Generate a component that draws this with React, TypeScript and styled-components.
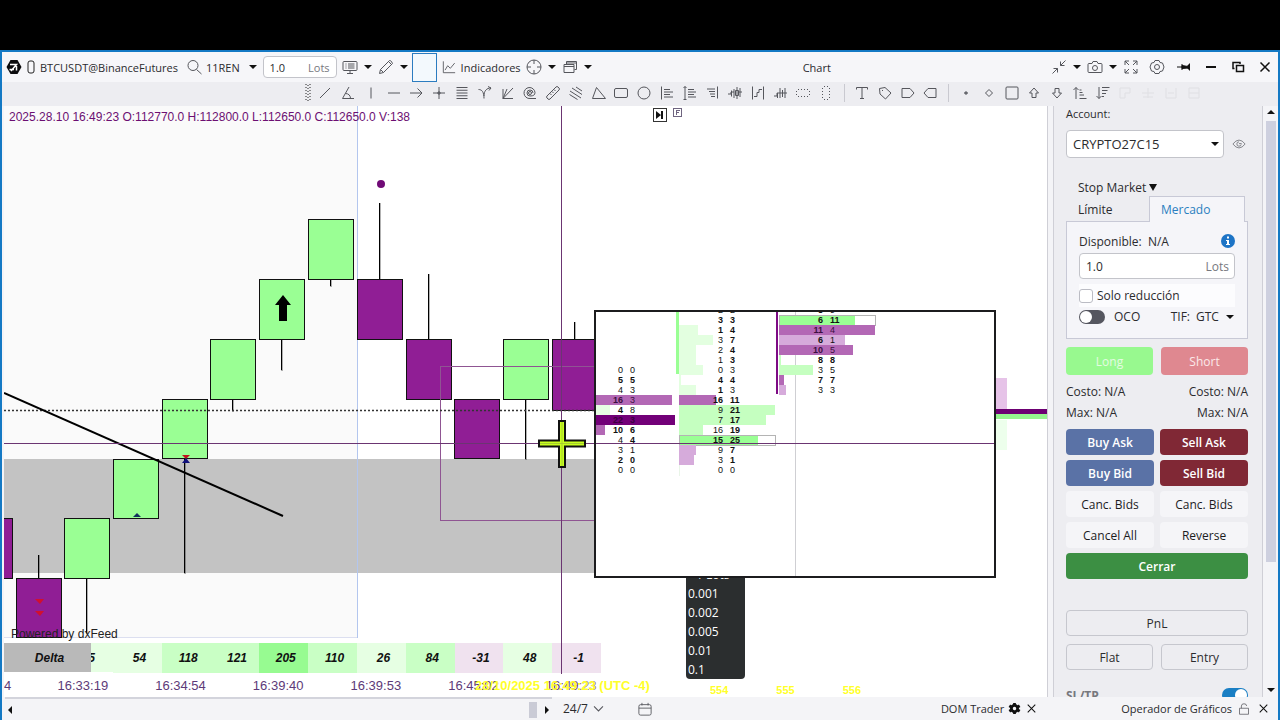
import React from "react";
import styled, { createGlobalStyle, css } from "styled-components";

const uiFont = '"Open Sans", "Noto Sans", sans-serif';
const chartFont = '"Liberation Sans", Arial, sans-serif';

const GlobalStyle = createGlobalStyle`
  *, *::before, *::after { box-sizing: border-box; }
  body { margin: 0; background: #000; font-family: ${uiFont}; font-size: 12px; color: #2b2b2e; }
  button, input, select { font: inherit; color: inherit; margin: 0; }
  button { cursor: pointer; }
`;

/* ---------- shell ---------- */

const Page = styled.div`
  display: flex;
  flex-direction: column;
  height: 100vh;
  padding-top: 50px;
`;

const Window = styled.main`
  flex: 1;
  min-height: 0;
  display: flex;
  flex-direction: column;
  border: solid #1479c4;
  border-width: 2px 2px 0;
  background: #f4f4f7;
`;

const TitleBar = styled.header`
  display: flex;
  align-items: center;
  height: 30px;
  padding: 0 5px 0 4px;
  background: #f6f6f9;
  font-size: 11px;
`;

const Group = styled.div<{ $gap?: number }>`
  display: flex;
  align-items: center;
  gap: ${(p) => p.$gap ?? 5}px;
  margin-right: ${(p) => (p.$gap ? 0 : 10)}px;
`;

const LeftGroup = styled(Group)`
  margin-right: 0;
`;

const Title = styled.h1`
  flex: 1;
  margin: 0;
  padding-right: 10px;
  font-size: 11px;
  font-weight: 400;
  text-align: center;
`;

const Label = styled.span`
  font-size: 11px;
  white-space: nowrap;
`;

const Instrument = styled(Label)`
  margin-right: 4px;
`;

const IconButton = styled.button<{ $w?: number }>`
  display: flex;
  align-items: center;
  justify-content: center;
  flex: none;
  width: ${(p) => p.$w ?? 16}px;
  height: 20px;
  padding: 0;
  border: 0;
  background: none;
`;

const TextButton = styled.button`
  display: flex;
  align-items: center;
  gap: 5px;
  padding: 0;
  border: 0;
  background: none;
  white-space: nowrap;
`;

const ActiveSlot = styled.button`
  width: 25px;
  height: 29px;
  margin-left: -2px;
  padding: 0;
  border: 1px solid #2b7cc0;
  background: #f3f9fd;
`;

const Field = styled.label<{ $size: "small" | "large" }>`
  display: flex;
  align-items: center;
  border: 1px solid #c3c4ca;
  border-radius: 4px;
  background: #fff;
  color: #77787e;
  ${(p) =>
    p.$size === "small"
      ? css`
          width: 74px;
          height: 22px;
          padding: 0 6px;
        `
      : css`
          height: 26px;
          padding: 0 5px 0 6px;
        `}
`;

const FieldInput = styled.input`
  flex: 1;
  min-width: 0;
  padding: 0;
  border: 0;
  outline: 0;
  background: none;
  color: #2b2b2e;
`;

const DrawBar = styled.nav`
  display: flex;
  align-items: center;
  height: 24px;
  padding: 0 0 2px 303px;
  background: #ededf1;
`;

const Tools = styled.div`
  display: flex;
  align-items: center;
  flex: 0 1 891px;
  margin-left: 3px;
`;

const Tool = styled.button<{ $faint?: boolean }>`
  display: flex;
  align-items: center;
  justify-content: center;
  flex: 1;
  height: 20px;
  padding: 0;
  border: 0;
  background: none;
  opacity: ${(p) => (p.$faint ? 0.08 : 1)};
`;

const ToolSeparator = styled.span`
  flex: none;
  width: 1px;
  height: 18px;
  margin: 0 6px;
  background: #c9c9d0;
`;

const Body = styled.div`
  flex: 1;
  min-height: 0;
  display: flex;
  padding-left: 2px;
`;

/* ---------- icons ---------- */

const Svg = styled.svg`
  display: block;
  flex: none;
  overflow: visible;
`;

type IconProps = { d: string; size?: number; color?: string; width?: number; fill?: string; children?: React.ReactNode };

function Icon({ d, size = 16, color = "#55565c", width = 1, fill = "none", children }: IconProps) {
  return (
    <Svg width={size} height={size} viewBox="0 0 16 16" fill={fill} stroke={color} strokeWidth={width} aria-hidden="true">
      <path d={d} />
      {children}
    </Svg>
  );
}

const caretPaths = {
  down: "M1 3h8L5 7z",
  tall: "M1 2h8L5 9z",
  up: "M1 7h8L5 3z",
  left: "M7 1v8L3 5z",
  right: "M3 1v8l4-4z",
};

function Caret({ dir = "down" }: { dir?: keyof typeof caretPaths }) {
  return (
    <Svg width="10" height="10" viewBox="0 0 10 10" fill="#111" aria-hidden="true">
      <path d={caretPaths[dir]} />
    </Svg>
  );
}

function CaretButton({ label }: { label: string }) {
  return (
    <IconButton $w={10} aria-label={label}>
      <Caret />
    </IconButton>
  );
}

function Logo() {
  return (
    <Svg width="16" height="16" viewBox="0 0 16 16" aria-hidden="true">
      <path d="M4.500 1h7L15.500 8l-4 7h-7L.500 8z" fill="#0c0c0e" />
      <path d="M4 5.500h6.500L5 12M10.500 7v4.500M3.500 10.500H8" fill="none" stroke="#fff" strokeWidth="1.500" />
    </Svg>
  );
}

const drawTools = [
  "M3 13 13 3",
  "M9 2 2.500 13.500H14M5.500 8.500c3 0 5 2 5 5",
  "M8 2.500v11",
  "M2 8h12",
  "M2 8h12M9.500 3.500 14 8l-4.500 4.500",
  "M8 2v12M2 8h12M7 7h2v2H7z",
  "M2.500 2.500h11M2.500 5.250h11M2.500 8h11M2.500 10.750h11M2.500 13.500h11",
  "M1.500 4.500C5 4.500 7 7 7 13.500M7 11c0-5 2.500-8 7-8M11 1.500 14 3l-2 2.500",
  "M3 4v9.500h10M3 13.500 13 3M3 13.500 7 4",
  "M13 7.500A5.500 5.500 0 1 0 8 13.500h6M11 8a3 3 0 1 0-3 3c3.500 0 5-1 5-3.500M8 6.500a1.500 1.500 0 1 0 0 3 1.500 1.500 0 0 0 0-3",
  "M2 11 11 2q1-1 2 0l1 1q1 1 0 2L5 14q-1 1-2 0l-1-1q-1-1 0-2zM5 8.500l1.500 1.500M7 6.500 8.500 8M9 4.500 10.500 6",
  "M2 6l11 7M4 3l10 6.500M1.500 9.500l8 5M8 2l6 4",
  "M5.500 2.500 14.500 13.500h-13z",
  "M3 3.500h10q1.500 0 1.500 1.500v6q0 1.500-1.500 1.500H3q-1.500 0-1.500-1.500V5q0-1.500 1.500-1.500z",
  "M8 2a6 6 0 1 0 0 12A6 6 0 0 0 8 2z",
  "M2.500 1.500v13M5 4.500h6M5 7h9M5 9.500h6M5 12h9",
  "M3 1.500v13M1.500 3 3 1.500 4.500 3M1.500 14.500h3M6 4.500h6M6 7h8M6 9.500h6M6 12h8",
  "M13.500 1.500v12M3 4h8M5 6.500h6M6 9h5M7 11.500h4",
  "M1 9h3V7h3M4.500 5.500v6M7 4v9M10 2v12M13 3v9M8.500 5.500h3v5h-3zM11.500 7H15",
  "M2.500 1.500v13M13.500 1.500v13M4 11.500h3v-4h2v-3h3",
  "M1 11h3V8h9M4.500 8v5M7 3v10M9.500 5v7M12 3v10M14 8h-1",
  "M3 4.500h1m2 0h1m2 0h1m2 0h1M3 11.500h1m2 0h1m2 0h1m2 0h1M1.500 6v1m0 2v1M14.500 6v1m0 2v1",
  "M4.500 3v1m0 2v1m0 2v1m0 2v1M11.500 3v1m0 2v1m0 2v1m0 2v1M6 1.500h1m2 0h1M6 14.500h1m2 0h1",
];

const textTools = [
  "M2.500 4.500v-2h11v2M8 2.500v11M6 13.500h4",
  "M2.500 3.500 8 2.500l6 5.500-5.500 6L3 9zM5 5.500h1",
  "M2 3.500h8l4 4.500-4 4.500H2z",
  "M14 3.500H6L2 8l4 4.500h8z",
];

const shapeTools = [
  "M7 7h2v2H7zM6.500 8h3",
  "M8 4.500 11.500 8 8 11.500 4.500 8z",
  "M3 2h10q1 0 1 1v10q0 1-1 1H3q-1 0-1-1V3q0-1 1-1z",
  "M8 3 12.500 8H10v4.500H6V8H3.500z",
  "M8 13 3.500 8H6V3.500h4V8h2.500z",
  "M4 14V2.500M1.500 5 4 2.500 6.500 5M7.500 5h2M7.500 7.500h3M7.500 10h4.500M7.500 13.500h7",
  "M4 2v11.500M1.500 11 4 13.500 6.500 11M7 2.500h7.500M7 5.500h5.500M7 8.500h4M7 11.500h2",
];

const faintTools = ["M3 3h10v5H8v5H3z", "M2 8h12M8 3v10M3 12h10", "M3 3v10h10V3M5 8h6", "M3 3h10v10H3zM3 8h10"];

/* ---------- chart ---------- */

const ChartArea = styled.section`
  position: relative;
  flex: 1;
  min-width: 0;
  display: flex;
  flex-direction: column;
  overflow: hidden;
  background: #fff;
  font-family: ${chartFont};
`;

const Plot = styled.svg`
  display: block;
  flex: 1;
  min-height: 0;
  width: 100%;
`;

const DeltaStrip = styled.div`
  display: flex;
  flex: none;
  height: 29px;
  line-height: 30px;
  font-size: 12px;
  font-weight: 700;
  font-style: italic;
  color: #111;
  text-align: center;
`;

const DeltaLabel = styled.div`
  flex: none;
  width: 87px;
  padding-left: 4px;
  background: #b9b9b9;
`;

const CutCell = styled.div`
  display: flex;
  justify-content: flex-end;
  flex: none;
  width: 22px;
  padding-right: 18px;
  overflow: hidden;
  background: #e6ffe3;
`;

const DeltaGrid = styled.div`
  display: grid;
  grid-template-columns: repeat(10, 1fr);
  width: 488px;
`;

const deltaTones = {
  faint: "#e6ffe3",
  soft: "#c9ffc5",
  strong: "#97fb91",
  negative: "#f0e2ef",
};
type Tone = keyof typeof deltaTones;

const DeltaCell = styled.div<{ $tone: Tone }>`
  padding-left: 4px;
  background: ${(p) => deltaTones[p.$tone]};
`;

const TimeAxis = styled.div`
  display: flex;
  flex: none;
  height: 25px;
  line-height: 28px;
  font-size: 13px;
  color: #5d3a78;
`;

const TimeStub = styled.span`
  flex: none;
  width: 30px;
`;

const TimeGrid = styled.div`
  display: grid;
  grid-template-columns: repeat(6, 1fr);
  width: 586px;
  text-align: center;
`;

const CrossVertical = styled.div`
  position: absolute;
  left: 557px;
  top: 0;
  bottom: 23px;
  width: 1px;
  background: #6b3572;
`;

const CursorStamp = styled.div`
  position: absolute;
  left: 471px;
  bottom: 3px;
  font-size: 13px;
  font-weight: 700;
  line-height: 16px;
  color: #ffff2a;
  white-space: nowrap;
`;

const YellowTicks = styled.div`
  position: absolute;
  left: 706px;
  bottom: 0;
  display: flex;
  gap: 48px;
  font-size: 11px;
  font-weight: 700;
  line-height: 14px;
  color: #ffff2a;
`;

const Inset = styled.div`
  position: absolute;
  left: 590px;
  top: 204px;
  width: 402px;
  height: 268px;
  border: 2px solid #1c1c1e;
  background: #fff;
`;

const InsetDrawing = styled.svg`
  display: block;
`;

const LotMenu = styled.ul`
  position: absolute;
  left: 682px;
  top: 459px;
  width: 59px;
  margin: 0;
  padding: 0 0 0 2px;
  list-style: none;
  border-radius: 4px;
  background: #2b2e2f;
  color: #fff;
  font-family: ${uiFont};
  font-size: 12px;
  line-height: 19px;
`;

const LotItem = styled.li<{ $unit?: boolean }>`
  padding-left: ${(p) => (p.$unit ? 8 : 0)}px;
`;

type Candle = { x: number; top: number; h: number; up?: boolean; wick?: [number, number] };

const candles: Candle[] = [
  { x: -37, top: 412, h: 60 },
  { x: 12, top: 472, h: 59, wick: [449, 472] },
  { x: 60, top: 412, h: 60, up: true, wick: [472, 527] },
  { x: 109, top: 353, h: 59, up: true },
  { x: 158, top: 293, h: 59, up: true, wick: [353, 467] },
  { x: 206, top: 233, h: 60, up: true, wick: [293, 305] },
  { x: 255, top: 173, h: 60, up: true, wick: [233, 264] },
  { x: 304, top: 113, h: 60, up: true, wick: [173, 180] },
  { x: 353, top: 173, h: 60, wick: [97, 173] },
  { x: 402, top: 233, h: 60, wick: [168, 233] },
  { x: 450, top: 293, h: 59 },
  { x: 499, top: 233, h: 60, up: true, wick: [293, 353] },
  { x: 548, top: 233, h: 71, wick: [216, 233] },
];

const purple = "#901e95";
const green = "#9aff94";

type Row = { bid: string; ask: string; bar?: number; fill?: string; frame?: number; ink?: string };
type Column = { x: number; bar: number; start: number; rows: Row[] };

/* a trailing * sets the figure in bold */
const footprint: Column[] = [
  {
    x: 0,
    bar: 0,
    start: 6,
    rows: [
      { bid: "0", ask: "0" },
      { bid: "5*", ask: "5*" },
      { bid: "4", ask: "3" },
      { bid: "16*", ask: "3", bar: 76, fill: "#b368b5", ink: "#3c0f40" },
      { bid: "4*", ask: "8", bar: 14, fill: "#e6ffe3" },
      { bid: "22*", ask: "3*", bar: 79, fill: "#720078", ink: "#3c0040" },
      { bid: "10*", ask: "6*", bar: 9, fill: "#b368b5" },
      { bid: "4", ask: "4*" },
      { bid: "3", ask: "1" },
      { bid: "2*", ask: "0*" },
      { bid: "0", ask: "0" },
    ],
  },
  {
    x: 100,
    bar: 83,
    start: 0,
    rows: [
      { bid: "2", ask: "2" },
      { bid: "3*", ask: "3*" },
      { bid: "1*", ask: "4*", bar: 19, fill: "#e3ffe0" },
      { bid: "3", ask: "7*", bar: 34, fill: "#e3ffe0" },
      { bid: "2", ask: "4*", bar: 17, fill: "#e3ffe0" },
      { bid: "1", ask: "3*", bar: 17, fill: "#e3ffe0" },
      { bid: "0", ask: "3", bar: 24, fill: "#e3ffe0" },
      { bid: "4*", ask: "4*", bar: 2, fill: "#e3ffe0" },
      { bid: "1*", ask: "3", bar: 17, fill: "#e3ffe0" },
      { bid: "16*", ask: "11*", bar: 37, fill: "#b368b5" },
      { bid: "9", ask: "21*", bar: 96, fill: "#c5ffc0" },
      { bid: "7", ask: "17*", bar: 87, fill: "#c5ffc0" },
      { bid: "16", ask: "19*", bar: 24, fill: "#c5ffc0" },
      { bid: "15*", ask: "25*", bar: 79, fill: green, frame: 96 },
      { bid: "9", ask: "7*", bar: 17, fill: "#d6abdb" },
      { bid: "3", ask: "1*", bar: 15, fill: "#d6abdb" },
      { bid: "0", ask: "0" },
    ],
  },
  {
    x: 200,
    bar: 183,
    start: 0,
    rows: [
      { bid: "8*", ask: "9" },
      { bid: "6*", ask: "11*", bar: 76, fill: green, frame: 96 },
      { bid: "11*", ask: "4", bar: 96, fill: "#b368b5", ink: "#3c0f40" },
      { bid: "6*", ask: "1", bar: 66, fill: "#d6abdb" },
      { bid: "10*", ask: "5", bar: 74, fill: "#b368b5", ink: "#3c0f40" },
      { bid: "8*", ask: "8*", bar: 2, fill: "#c5ffc0" },
      { bid: "3", ask: "5", bar: 34, fill: "#c5ffc0" },
      { bid: "7*", ask: "7*", bar: 5, fill: "#b368b5" },
      { bid: "3", ask: "3", bar: 7, fill: "#d6abdb" },
    ],
  },
];

function Figure({ value, x, y, anchor, ink }: { value: string; x: number; y: number; anchor: "start" | "end"; ink: string }) {
  const bold = value.endsWith("*");
  return (
    <text x={x} y={y} textAnchor={anchor} fontWeight={bold ? 700 : 400} fill={ink}>
      {bold ? value.slice(0, -1) : value}
    </text>
  );
}

function FootprintInset() {
  return (
    <Inset>
      <InsetDrawing width="398" height="264" fontSize="9" role="img" aria-label="Footprint">
        <rect x="80" y="0" width="3" height="62" fill={green} />
        <rect x="83" y="62" width="1" height="102" fill="#e9f5e8" />
        <rect x="180" y="0" width="2" height="82" fill="#7d0a84" />
        <rect x="199" y="0" width="1" height="264" fill="#cfcfd3" />
        {footprint.map((col) =>
          col.rows.map((row, i) => {
            const top = (col.start + i) * 10 - 7;
            return (
              <g key={`${col.x}-${i}`}>
                {row.bar && <rect x={col.bar} y={top} width={row.bar} height="10" fill={row.fill} />}
                {row.frame && (
                  <rect x={col.bar} y={top} width={row.frame} height="10" fill="none" stroke="#b4b4b4" shapeRendering="crispEdges" />
                )}
                <Figure value={row.bid} x={col.x + 27} y={top + 8} anchor="end" ink={row.ink ?? "#111"} />
                <Figure value={row.ask} x={col.x + 34} y={top + 8} anchor="start" ink={row.ink ?? "#111"} />
              </g>
            );
          })
        )}
        <rect x="0" y="131" width="398" height="1" fill="#6b3572" />
      </InsetDrawing>
    </Inset>
  );
}

const deltas: [string, Tone][] = [
  ["54", "faint"],
  ["118", "soft"],
  ["121", "soft"],
  ["205", "strong"],
  ["110", "soft"],
  ["26", "faint"],
  ["84", "soft"],
  ["-31", "negative"],
  ["48", "faint"],
  ["-1", "negative"],
];

const times = ["16:33:19", "16:34:54", "16:39:40", "16:39:53", "16:45:02", "16:49:23"];

function Chart() {
  return (
    <ChartArea>
      <Plot role="img" aria-label="BTCUSDT">
        <rect x="0" y="0" width="353" height="531" fill="#fafafa" />
        <rect x="0" y="353" width="592" height="114" fill="#c3c3c3" />
        <rect x="353" y="0" width="1" height="532" fill="#b3c6ee" />
        <rect x="0" y="531" width="353" height="1" fill="#dcdff0" />
        <g shapeRendering="crispEdges">
          {candles.map((c) => (
            <g key={c.x}>
              {c.wick && (
                <rect x={c.x + 22} y={c.wick[0]} width="1" height={c.wick[1] - c.wick[0]} fill="#000" stroke="#000" strokeOpacity="0.3" />
              )}
              <rect x={c.x} y={c.top} width="45" height={c.h} fill={c.up ? green : purple} stroke="#111" />
            </g>
          ))}
          <rect x="436" y="260" width="170" height="154" fill="none" stroke="#8f5592" />
        </g>
        <path d="M0 304.500h592" stroke="#333" strokeWidth="1.500" strokeDasharray="2 2" />
        <path d="M0 287 279 410" stroke="#000" strokeWidth="2" />
        <rect x="0" y="337" width="600" height="1" fill="#6b3572" />
        <circle cx="377" cy="78" r="4" fill="#700a76" />
        <path d="M279 189l8 10h-4v16h-8v-16h-4z" fill="#000" />
        <path d="M178 349h8l-4 4z" fill="#c0141c" />
        <path d="M178 357h8l-4-5z" fill="#12127c" />
        <path d="M129 411h8l-4-4z" fill="#12305c" />
        <path d="M31 493h9l-4 5zM31 505h9l-4 5z" fill="#d0102e" />
        <rect x="991" y="272" width="12" height="32" fill="#e6c3e8" />
        <rect x="991" y="314" width="12" height="30" fill="#edffec" />
        <rect x="991" y="303" width="52" height="5" fill="#6d0073" />
        <rect x="991" y="308" width="52" height="5" fill="#95f58f" />
        <text x="5" y="15" fontSize="12" fill="#6c0f72">
          2025.28.10 16:49:23 O:112770.0 H:112800.0 L:112650.0 C:112650.0 V:138
        </text>
        <text x="7" y="532" fontSize="12" fill="#222">
          Powered by dxFeed
        </text>
        <g fill="none" stroke="#333" shapeRendering="crispEdges">
          <rect x="649" y="2" width="13" height="13" />
          <rect x="669" y="2" width="8" height="8" stroke="#6f6580" />
          <path d="M672 9V4h4M672 6h3" stroke="#6f6580" />
        </g>
        <path d="M652 5v8l5-4zM657 5h2v8h-2z" fill="#111" />
      </Plot>
      <DeltaStrip>
        <DeltaLabel>Delta</DeltaLabel>
        <CutCell>45</CutCell>
        <DeltaGrid>
          {deltas.map(([value, tone]) => (
            <DeltaCell key={value} $tone={tone}>
              {value}
            </DeltaCell>
          ))}
        </DeltaGrid>
      </DeltaStrip>
      <TimeAxis>
        <TimeStub>4</TimeStub>
        <TimeGrid>
          {times.map((t) => (
            <span key={t}>{t}</span>
          ))}
        </TimeGrid>
      </TimeAxis>
      <CrossVertical />
      <CrossCursor />
      <CursorStamp>28/10/2025 16:49:23 (UTC -4)</CursorStamp>
      <YellowTicks>
        <span>554</span>
        <span>555</span>
        <span>556</span>
      </YellowTicks>
      <LotMenu>
        <LotItem $unit>1 Lots</LotItem>
        <LotItem>0.001</LotItem>
        <LotItem>0.002</LotItem>
        <LotItem>0.005</LotItem>
        <LotItem>0.01</LotItem>
        <LotItem>0.1</LotItem>
      </LotMenu>
      <FootprintInset />
    </ChartArea>
  );
}

const CursorSvg = styled.svg`
  position: absolute;
  left: 533px;
  top: 313px;
`;

function CrossCursor() {
  return (
    <CursorSvg width="50" height="50" viewBox="0 0 50 50" aria-hidden="true">
      <path
        d="M22 2h6v19.500h20v6H28V48h-6V27.500H2v-6h20z"
        fill="#c8ff1e"
        stroke="#111"
        strokeWidth="2"
      />
      <path d="M25 3v44M3 24.500h44" stroke="#a6cc30" />
    </CursorSvg>
  );
}

/* ---------- trading panel ---------- */

const Splitter = styled.div`
  flex: none;
  width: 7px;
  border: solid #cfcfd6;
  border-width: 0 1px;
  background: #f4f4f7;
`;

const Panel = styled.aside`
  flex: none;
  width: 208px;
  overflow: hidden;
  padding: 0 14px 0 12px;
  background: #ededf1;
`;

const AccountLabel = styled.label`
  display: block;
  height: 24px;
  font-size: 11px;
  line-height: 15px;
`;

const Row = styled.div<{ $gap?: number; $h?: number; $between?: boolean }>`
  display: flex;
  align-items: center;
  gap: ${(p) => p.$gap ?? 8}px;
  ${(p) => p.$h && `height: ${p.$h}px;`}
  ${(p) => p.$between && "justify-content: space-between;"}
`;

const SelectBox = styled.span<{ $plain?: boolean }>`
  display: flex;
  align-items: center;
  ${(p) =>
    p.$plain
      ? "gap: 6px; margin-left: auto;"
      : css`
          flex: 1;
          height: 28px;
          padding: 0 3px 0 6px;
          border: 1px solid #c3c4ca;
          border-radius: 4px;
          background: #fff;
          font-size: 13px;
        `}
`;

const Select = styled.select`
  flex: 1;
  appearance: none;
  padding: 0;
  border: 0;
  outline: 0;
  background: none;
`;

const TypeButton = styled(TextButton)`
  gap: 2px;
  height: 16px;
  margin: 21px 0 0 12px;
`;

const Tabs = styled.div`
  display: flex;
  height: 26px;
  margin: 1px 4px -1px 0;
`;

const Tab = styled.button<{ $active?: boolean }>`
  flex: none;
  width: ${(p) => (p.$active ? 96 : 83)}px;
  padding: 0 0 0 ${(p) => (p.$active ? 11 : 12)}px;
  border: solid #c8c9d6;
  border-width: ${(p) => (p.$active ? "1px 1px 0" : 0)};
  background: ${(p) => (p.$active ? "#f5f5f9" : "transparent")};
  color: ${(p) => (p.$active ? "#2b7fc0" : "inherit")};
  text-align: left;
`;

const Ticket = styled.div`
  height: 118px;
  padding: 11px 12px 0;
  border: 1px solid #c8c9d6;
  background: #f5f5f9;
`;

const CheckRow = styled.label`
  display: flex;
  align-items: center;
  gap: 4px;
  height: 23px;
  margin-top: 5px;
  background: #fcfcfe;
`;

const Check = styled.input`
  appearance: none;
  width: 14px;
  height: 14px;
  border: 1px solid #bbbcc4;
  border-radius: 3px;
  background: #fff;
`;

const SwitchRow = styled(Row)`
  gap: 9px;
  height: 19px;
`;

const Switch = styled.input`
  appearance: none;
  flex: none;
  display: flex;
  align-items: center;
  justify-content: flex-start;
  width: 26px;
  height: 14px;
  border-radius: 7px;
  background: #55565f;
  &::before {
    content: "";
    width: 12px;
    height: 12px;
    margin: 0 1px;
    border-radius: 50%;
    background: #fff;
  }
  &:checked {
    justify-content: flex-end;
    background: #1a7fc4;
  }
`;

const tones = {
  long: css`
    background: #98f98f;
    color: #e4fbe2;
  `,
  short: css`
    background: #df8890;
    color: #fbe9ea;
  `,
  buy: css`
    background: #5a72a6;
    color: #fff;
    font-weight: 600;
  `,
  sell: css`
    background: #802835;
    color: #fff;
    font-weight: 600;
  `,
  plain: css`
    background: #f5f5f8;
    color: #1c1c1e;
    font-weight: 500;
  `,
  close: css`
    background: #3c8f43;
    color: #fff;
    font-weight: 600;
  `,
  outline: css`
    background: #ededf1;
    border: 1px solid #c6c7ce;
  `,
};

const Action = styled.button<{ $tone: keyof typeof tones; $h?: number }>`
  height: ${(p) => p.$h ?? 26}px;
  padding: 0;
  border: 0;
  border-radius: 4px;
  ${(p) => tones[p.$tone]}
`;

const Pair = styled.div<{ $gap?: number; $top?: number }>`
  display: grid;
  grid-template-columns: 1fr 1fr;
  gap: 5px ${(p) => p.$gap ?? 6}px;
  margin-top: ${(p) => p.$top ?? 0}px;
`;

const Wide = styled.div<{ $top: number }>`
  display: grid;
  grid-template-columns: minmax(0, 1fr);
  margin-top: ${(p) => p.$top}px;
`;

const Costs = styled.dl`
  display: grid;
  grid-template-columns: 1fr 1fr;
  margin: 6px 0;
  line-height: 21px;
`;

const Cost = styled.div<{ $right?: boolean }>`
  text-align: ${(p) => (p.$right ? "right" : "left")};
  dt,
  dd {
    display: inline;
    margin: 0;
  }
`;

const SectionRow = styled.label`
  display: flex;
  align-items: center;
  justify-content: space-between;
  height: 20px;
  margin-top: 15px;
  color: #77787e;
  font-weight: 700;
`;

const ScrollTrack = styled.div`
  flex: none;
  display: flex;
  flex-direction: column;
  align-items: center;
  width: 16px;
  padding: 1px 0 2px;
  border-left: 1px solid #cfcfd6;
  background: #f4f4f7;
`;

const ScrollThumb = styled.div`
  flex: 0 1 75%;
  width: 10px;
  margin: 4px 0 auto;
  background: #ced0df;
`;

const ScrollButton = styled(IconButton)`
  width: 10px;
  height: 10px;
`;

function TradingPanel() {
  return (
    <Panel>
      <AccountLabel htmlFor="account">Account:</AccountLabel>
      <Row $gap={6}>
        <SelectBox>
          <Select id="account" defaultValue="a">
            <option value="a">CRYPTO27C15</option>
          </Select>
          <Caret />
        </SelectBox>
        <IconButton $w={18} aria-label="Ocultar">
          <Icon size={14} d="M1 8q7-9 14 0-7 9-14 0zM8 5.500a2.500 2.500 0 1 0 2.500 3M8 7.500h3" color="#77787e" />
        </IconButton>
      </Row>
      <TypeButton>
        Stop Market <Caret dir="tall" />
      </TypeButton>
      <Tabs>
        <Tab>Límite</Tab>
        <Tab $active>Mercado</Tab>
      </Tabs>
      <Ticket>
        <Row $between $h={16}>
          <span>Disponible:&nbsp; N/A</span>
          <Svg width="14" height="14" viewBox="0 0 14 14" aria-hidden="true">
            <circle cx="7" cy="7" r="7" fill="#1d74c6" />
            <path d="M6 2.500h2v2H6zM5 6h3v4h1v1H5v-1h1V7H5z" fill="#fff" />
          </Svg>
        </Row>
        <Wide $top={4}>
          <Field $size="large">
            <FieldInput defaultValue="1.0" aria-label="Cantidad" />
            Lots
          </Field>
        </Wide>
        <CheckRow>
          <Check type="checkbox" />
          Solo reducción
        </CheckRow>
        <SwitchRow>
          <Switch type="checkbox" id="oco" />
          <label htmlFor="oco">OCO</label>
          <SelectBox $plain>
            <label htmlFor="tif">TIF:</label>
            <Select id="tif" defaultValue="GTC">
              <option>GTC</option>
            </Select>
            <Caret />
          </SelectBox>
        </SwitchRow>
      </Ticket>
      <Pair $gap={8} $top={8}>
        <Action $tone="long" $h={28}>Long</Action>
        <Action $tone="short" $h={28}>Short</Action>
      </Pair>
      <Costs>
        <Cost><dt>Costo:</dt> <dd>N/A</dd></Cost>
        <Cost $right><dt>Costo:</dt> <dd>N/A</dd></Cost>
        <Cost><dt>Max:</dt> <dd>N/A</dd></Cost>
        <Cost $right><dt>Max:</dt> <dd>N/A</dd></Cost>
      </Costs>
      <Pair>
        <Action $tone="buy">Buy Ask</Action>
        <Action $tone="sell">Sell Ask</Action>
        <Action $tone="buy">Buy Bid</Action>
        <Action $tone="sell">Sell Bid</Action>
        <Action $tone="plain">Canc. Bids</Action>
        <Action $tone="plain">Canc. Bids</Action>
        <Action $tone="plain">Cancel All</Action>
        <Action $tone="plain">Reverse</Action>
      </Pair>
      <Wide $top={5}>
        <Action $tone="close">Cerrar</Action>
      </Wide>
      <Wide $top={31}>
        <Action $tone="outline">PnL</Action>
      </Wide>
      <Pair $gap={8} $top={8}>
        <Action $tone="outline">Flat</Action>
        <Action $tone="outline">Entry</Action>
      </Pair>
      <SectionRow>
        SL/TP
        <Switch type="checkbox" defaultChecked />
      </SectionRow>
    </Panel>
  );
}

/* ---------- status bar ---------- */

const StatusBar = styled.footer`
  display: flex;
  align-items: center;
  flex: none;
  height: 23px;
  padding: 0 8px 0 3px;
  background: #f4f4f7;
`;

const TimeScroll = styled.div`
  display: flex;
  align-items: center;
  flex: none;
  width: 547px;
  height: 100%;
  border-top: 2px solid #d3d4dc;
`;

const TimeThumb = styled.div`
  width: 8px;
  height: 16px;
  margin: 0 5px 0 auto;
  background: #cacbd6;
`;

const StatusGroup = styled.div<{ $left?: number; $gap?: number }>`
  display: flex;
  align-items: center;
  gap: ${(p) => p.$gap ?? 0}px;
  margin-left: ${(p) => (p.$left ? `${p.$left}px` : "auto")};
  white-space: nowrap;
`;

const closePath = "M3.500 3.500l9 9M12.500 3.500l-9 9";

export default function App() {
  return (
    <Page>
      <GlobalStyle />
      <Window>
        <TitleBar>
          <LeftGroup>
            <Logo />
            <Svg width="8" height="16" viewBox="0 0 8 16" fill="none" stroke="#222" aria-hidden="true">
              <rect x="1" y="2" width="6" height="12" rx="2" />
            </Svg>
            <Instrument>BTCUSDT@BinanceFutures</Instrument>
            <IconButton $w={14} aria-label="Buscar">
              <Icon d="M7 1.500a5 5 0 1 0 0 10 5 5 0 0 0 0-10M10.500 10.500l5 4.500" />
            </IconButton>
            <TextButton>
              11REN&nbsp;
              <Caret />
            </TextButton>
            <Field $size="small">
              <FieldInput defaultValue="1.0" aria-label="Lotes" />
              Lots
            </Field>
            <IconButton aria-label="Plantilla">
              <Icon d="M2 2.500h12q1 0 1 1v7q0 1-1 1H2q-1 0-1-1v-7q0-1 1-1zM8 11.500v3M5 14.500h6M3.500 5h1M6 5h6.500M3.500 7h1M6 7h6.500M3.500 9h1M6 9h6.500" />
            </IconButton>
            <CaretButton label="Plantillas" />
            <IconButton aria-label="Dibujar">
              <Icon d="M1.500 14.500l1-4L11.500 1.500q1 0 1.500.500t1.500 2.500L5.500 13.500zM2.500 10.500l3 3M10.500 2.500l3 3" />
            </IconButton>
            <CaretButton label="Objetos" />
            <ActiveSlot aria-label="Seleccionado" />
            <TextButton>
              <Icon size={14} d="M1.500 1.500v13H15M3.500 11.500l3-5 3 3 5-6" />
              Indicadores
            </TextButton>
            <IconButton aria-label="Cursor">
              <Icon d="M8 1a7 7 0 1 0 0 14A7 7 0 0 0 8 1M8 1v4M8 11v4M1 8h4M11 8h4" />
            </IconButton>
            <CaretButton label="Cursores" />
            <IconButton aria-label="Ventanas">
              <Icon d="M2 5.500h10v8H2zM2 7.500h10M4.500 5V2.500h10v8H12.500M4.500 4h10" />
            </IconButton>
            <CaretButton label="Lista de ventanas" />
          </LeftGroup>
          <Title>Chart</Title>
          <Group>
            <IconButton aria-label="Contraer">
              <Icon d="M14.500 1.500 9.500 6.500M9.500 2.500v4h4M1.500 14.500l5-5M2.500 9.500h4v4" />
            </IconButton>
            <CaretButton label="Opciones de tamaño" />
            <IconButton aria-label="Captura">
              <Icon d="M2 4.500h3l1-2h4l1 2h3q1 0 1 1v7q0 1-1 1H2q-1 0-1-1v-7q0-1 1-1zM8 6.500a2.500 2.500 0 1 0 0 5 2.500 2.500 0 0 0 0-5" />
            </IconButton>
            <CaretButton label="Opciones de captura" />
            <IconButton aria-label="Pantalla completa">
              <Icon d="M2 6V2h4M2 2l4 4M10 2h4v4M14 2l-4 4M2 10v4h4M2 14l4-4M14 10v4h-4M14 14l-4-4" />
            </IconButton>
          </Group>
          <Group $gap={11}>
            <IconButton aria-label="Ajustes">
              <Icon d="M6 1.500h4l1 2 2.500.500 1.500 4-1.500 4-2.500.500-1 2H6l-1-2-2.500-.500L1 8l1.500-4L5 3.500zM8 5.500a2.500 2.500 0 1 0 0 5 2.500 2.500 0 0 0 0-5" />
            </IconButton>
            <IconButton aria-label="Fijar">
              <Icon color="#111" fill="#111" d="M1 8h5M6 5v6M6 6.500l6 1V6l1 0v4h-1v-1l-6 .500z">
                <path d="M13.500 4.500v7" />
              </Icon>
            </IconButton>
            <IconButton aria-label="Minimizar">
              <Icon color="#111" width={2} d="M3 8h10" />
            </IconButton>
            <IconButton aria-label="Restaurar">
              <Icon color="#111" width={1.5} d="M6.500 6.500h7v6h-7zM4.500 9.500H3v-6h7V5" />
            </IconButton>
            <IconButton aria-label="Cerrar ventana">
              <Icon color="#111" width={1.5} d={closePath} />
            </IconButton>
          </Group>
        </TitleBar>
        <DrawBar>
          <Svg width="6" height="18" viewBox="0 0 6 18" aria-hidden="true">
            <path d="M1 0v18M5 0v18" stroke="#222" strokeDasharray="1 2" />
            <path d="M3 1v17" stroke="#222" strokeDasharray="1 2" />
          </Svg>
          <Tools>
            {drawTools.map((d) => (
              <Tool key={d} aria-label="Herramienta de dibujo">
                <Icon d={d} />
              </Tool>
            ))}
            <ToolSeparator />
            {textTools.map((d) => (
              <Tool key={d} aria-label="Herramienta de texto">
                <Icon d={d} />
              </Tool>
            ))}
            <ToolSeparator />
            {shapeTools.map((d) => (
              <Tool key={d} aria-label="Marcador">
                <Icon d={d} />
              </Tool>
            ))}
            {faintTools.map((d) => (
              <Tool key={d} $faint disabled aria-label="No disponible">
                <Icon d={d} />
              </Tool>
            ))}
          </Tools>
        </DrawBar>
        <Body>
          <Chart />
          <Splitter />
          <TradingPanel />
          <ScrollTrack>
            <ScrollButton aria-label="Subir">
              <Caret dir="up" />
            </ScrollButton>
            <ScrollThumb />
            <ScrollButton aria-label="Bajar">
              <Caret />
            </ScrollButton>
          </ScrollTrack>
        </Body>
        <StatusBar>
          <TimeScroll>
            <Caret dir="left" />
            <TimeThumb />
            <Caret dir="right" />
          </TimeScroll>
          <StatusGroup $left={11} $gap={4}>
            <TextButton>
              24/7
              <Icon size={11} d="M1.500 5 8 11.500 14.500 5" width={1.5} />
            </TextButton>
          </StatusGroup>
          <StatusGroup $left={33}>
            <IconButton aria-label="Calendario">
              <Icon size={14} d="M3 3h10q2 0 2 2v8q0 2-2 2H3q-2 0-2-2V5q0-2 2-2zM1 7h14M4.500 1v3M11.500 1v3" />
            </IconButton>
          </StatusGroup>
          <StatusGroup $gap={2}>
            <Label>DOM Trader</Label>
            <IconButton aria-label="Ajustes DOM">
              <Icon size={11} color="#111" width={4} d="M8 3.500a4.500 4.500 0 1 0 0 9 4.500 4.500 0 0 0 0-9">
                <path d="M8 0v3M8 13v3M0.500 4l3 2M15.500 4l-3 2M.500 12l3-2M15.500 12l-3-2" />
              </Icon>
            </IconButton>
            <IconButton $w={14} aria-label="Cerrar DOM">
              <Icon size={11} color="#111" width={1.5} d="M2.500 2.500l11 11M13.500 2.500l-11 11" />
            </IconButton>
          </StatusGroup>
          <StatusGroup $left={83} $gap={4}>
            <Label>Operador de Gráficos</Label>
            <IconButton aria-label="Bloquear">
              <Icon size={12} d="M2 7h12v8H2zM4.500 7V4q0-3 3.500-3t3.500 3" />
            </IconButton>
            <IconButton $w={14} aria-label="Cerrar operador">
              <Icon size={11} color="#111" width={1.5} d="M2.500 2.500l11 11M13.500 2.500l-11 11" />
            </IconButton>
          </StatusGroup>
        </StatusBar>
      </Window>
    </Page>
  );
}
